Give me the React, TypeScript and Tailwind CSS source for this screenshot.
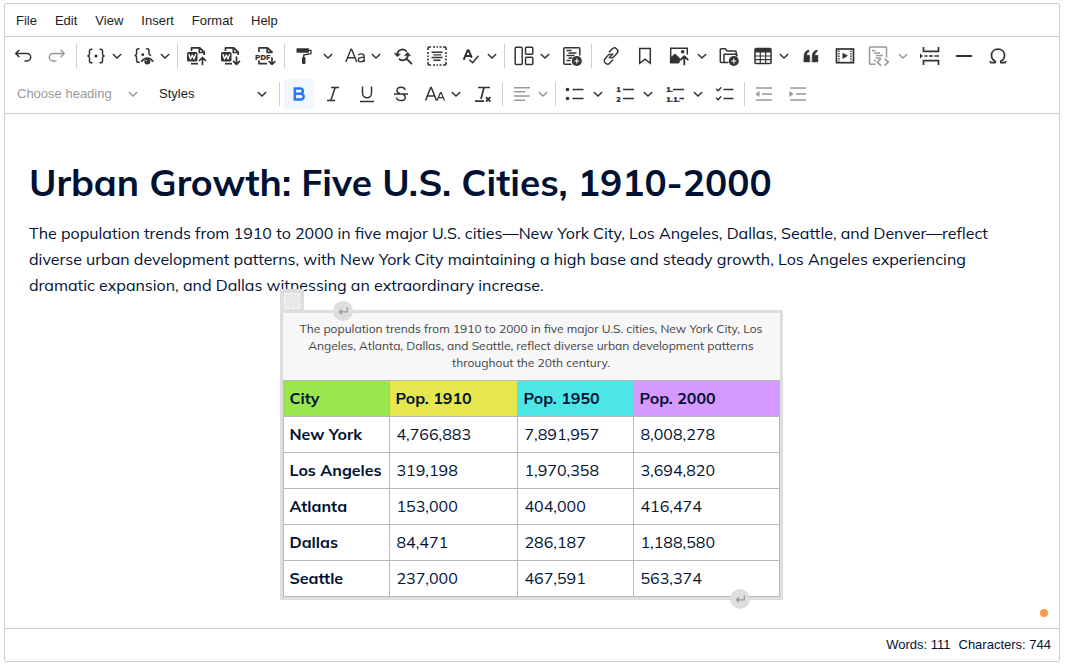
import { ReactNode } from 'react'

interface IconProps {
    children: ReactNode
}

function Icon({ children }: IconProps) {
    return (
        <svg
            viewBox="0 0 20 20"
            className="h-5 w-5 shrink-0 overflow-visible"
            fill="none"
            stroke="currentColor"
            strokeWidth="1.5"
            strokeLinecap="round"
            strokeLinejoin="round"
            fontFamily="Mulish, 'Open Sans', sans-serif"
            aria-hidden="true"
        >
            {children}
        </svg>
    )
}

const plusBadge = (
    <>
        <circle cx="14.8" cy="15" r="5" fill="currentColor" stroke="none" />
        <path d="M14.8 12.5v5M12.3 15h5" stroke="#fff" strokeWidth="1.1" strokeLinecap="butt" />
    </>
)

const wordDoc = (
    <>
        <path d="M4.5 5V1.8h8.3l4.4 4.4v2.8M12.3 2v4.5h4.7" strokeWidth="1.7" strokeLinecap="butt" />
        <path d="M4 17.7h7" strokeWidth="1.7" strokeLinecap="butt" />
        <rect x="0" y="6" width="10.5" height="9.5" rx="1.5" fill="currentColor" stroke="none" />
        <path d="m2 8.5 1.5 4.5 1.75-4L7 13l1.5-4.5" stroke="#fff" strokeWidth="1.3" />
    </>
)

const icons: Record<string, ReactNode> = {
    undo: <path d="M6 4.3 2.7 7.5 6 10.7M2.9 7.5H14a3.7 3.7 0 0 1 0 7.4h-2" />,
    redo: <path d="M14 4.3l3.3 3.2L14 10.7M17.1 7.5H6a3.7 3.7 0 0 0 0 7.4h3" />,
    mergeField: (
        <>
            <path d="M6 3.2H5.3c-1.2 0-1.8.6-1.8 1.8v2.7c0 1.3-.5 2-1.6 2.3 1.1.3 1.6 1 1.6 2.3V15c0 1.2.6 1.8 1.8 1.8H6M14 3.2h.7c1.2 0 1.8.6 1.8 1.8v2.7c0 1.3.5 2 1.6 2.3-1.1.3-1.6 1-1.6 2.3V15c0 1.2-.6 1.8-1.8 1.8H14" />
            <circle cx="10" cy="10" r="1.6" fill="currentColor" stroke="none" />
        </>
    ),
    mergePreview: (
        <>
            <path d="M5 2.7h-.6c-1.2 0-1.8.6-1.8 1.8v2.7c0 1.3-.4 2-1.5 2.3 1.1.3 1.5 1 1.5 2.3v2.7c0 1.2.6 1.8 1.8 1.8H5M12.6 2.7h.6c1.2 0 1.8.6 1.8 1.8v2.7c0 1.3.4 1.8 1.5 2.1" />
            <circle cx="8.8" cy="8.7" r="1.4" fill="currentColor" stroke="none" />
            <path d="M7.7 15.2c1.5-2.1 3.4-3.2 5.6-3.2s4.1 1.1 5.5 3.2" strokeWidth="1.7" />
            <circle cx="13.3" cy="15.5" r="3" fill="currentColor" stroke="none" />
            <circle cx="12.3" cy="14.6" r=".7" fill="#fff" stroke="none" />
        </>
    ),
    importWord: (
        <>
            {wordDoc}
            <path d="M15.5 18.5v-6.8M12.5 14.5l3-3 3 3" strokeWidth="1.7" />
        </>
    ),
    exportWord: (
        <>
            {wordDoc}
            <path d="M15.5 11v7M12.5 15.4l3 3 3-3" strokeWidth="1.7" />
        </>
    ),
    exportPdf: (
        <>
            <path d="M4 6V1.8h8.5L17 6.2v.8M12.2 2v4.3H17M4 14.5v3.2h8" strokeWidth="1.7" strokeLinecap="butt" />
            <text x="0" y="13.5" fontSize="7.5" fontWeight="900" fill="currentColor" stroke="none">PDF</text>
            <path d="M17 12v6.3M14.2 15.6l2.8 2.8 2.8-2.8" strokeWidth="1.7" />
        </>
    ),
    paint: (
        <>
            <rect x="2.5" y="2.3" width="12.5" height="4.4" rx=".8" fill="currentColor" stroke="none" />
            <path d="M15 4.3h2v3.4L9.7 9v2.5" strokeWidth="1.3" />
            <rect x="8" y="11" width="3.5" height="7" rx="1" fill="currentColor" stroke="none" />
        </>
    ),
    changeCase: (
        <>
            <path d="M.8 16 6 3.3h.6L11.8 16M2.6 11.7H10" strokeWidth="1.4" strokeLinecap="butt" />
            <path d="M13.3 9c.8-.8 1.7-1.2 3-1.2 1.9 0 2.9.9 2.9 2.7V16M19.2 11.3h-2.6c-2 0-3.3.7-3.3 2.3 0 1.4 1 2.2 2.5 2.2 1.7 0 3-.9 3.4-2.3" strokeWidth="1.3" strokeLinecap="butt" />
        </>
    ),
    find: (
        <>
            <path d="M13.2 5.2A5.2 5.2 0 0 0 4.2 9.2M6.5 13.2a5.2 5.2 0 0 0 8.3-5M13.8 13l4.7 4.7" strokeWidth="1.8" />
            <path d="M1.5 7.5 4.3 10.7l3-2.4zM11.6 9.5l3-3.2 2.8 3.1z" fill="currentColor" strokeWidth=".6" />
        </>
    ),
    selectAll: (
        <>
            <path d="M1 4V2a1 1 0 0 1 1-1h2M16 1h2a1 1 0 0 1 1 1v2M19 16v2a1 1 0 0 1-1 1h-2M4 19H2a1 1 0 0 1-1-1v-2" strokeWidth="1.6" strokeLinecap="butt" />
            <path d="M6 1h2M9.5 1h1.5M12.5 1h2M6 19h2M9.5 19h1.5M12.5 19h2M1 6v2M1 9.5V11M1 12.5v2M19 6v2M19 9.5V11M19 12.5v2" strokeWidth="1.6" strokeLinecap="butt" />
            <path d="M4.5 6.2h11M6.5 8.9h8M4.5 11.5h11M6.5 14.2h7" strokeWidth="1.4" strokeLinecap="butt" />
        </>
    ),
    spell: (
        <>
            <path d="M3 13 6.7 4.2h.8L10.5 11M4.7 9.9h4.6" strokeWidth="2" />
            <path d="m8.7 14 2.9 2.8 5.5-6.6" />
        </>
    ),
    layout: (
        <>
            <rect x="1.2" y="1.3" width="7" height="17.2" rx="1" />
            <rect x="11.5" y="1.3" width="7.3" height="7" rx="1" />
            <rect x="11.5" y="11.3" width="7.3" height="7.2" rx="1" />
        </>
    ),
    template: (
        <>
            <path d="M9 18.2H2.8a1 1 0 0 1-1-1V2.8a1 1 0 0 1 1-1h14a1 1 0 0 1 1 1V9" />
            <path d="M4.5 4.5h5M6.5 7h8M4.5 9.5h8M6.5 12h4M4.5 14.5h4" strokeWidth="1.4" strokeLinecap="butt" />
            {plusBadge}
        </>
    ),
    link: (
        <path d="m8.3 6.1 2.8-3c1.3-1.4 3.3-1.4 4.6-.2 1.4 1.3 1.4 3.3.1 4.7l-3.2 3.3c-.8.8-1.7 1.1-2.7 1M11.7 13.9l-2.8 3c-1.3 1.4-3.3 1.4-4.6.2-1.4-1.3-1.4-3.3-.1-4.7l3.2-3.3c.8-.8 1.7-1.1 2.7-1M8.2 11.8l3.6-3.7" strokeWidth="1.4" />
    ),
    bookmark: <path d="M4.7 2.6h10.6v14.7L10 13.1l-5.3 4.2z" strokeLinejoin="miter" />,
    image: (
        <>
            <path d="M9 16.4H1.7V2.3h16.6V8" strokeLinejoin="miter" />
            <path d="M1.7 11.5 6 7.8l5.5 5.2-1.5 4H1.7z" fill="currentColor" strokeWidth=".5" />
            <circle cx="13.7" cy="5.7" r="1.8" fill="currentColor" stroke="none" />
            <path d="M15.3 18.5v-8M11.8 13.7l3.5-3.5 3.5 3.5" strokeWidth="1.8" />
        </>
    ),
    folder: (
        <>
            <path d="M9 16.5H2.3a1 1 0 0 1-1-1V3.7a1 1 0 0 1 1-1h4L8.2 5h8a1 1 0 0 1 1 1v3" />
            <path d="M5 16V8.2h12.8V10" />
            {plusBadge}
        </>
    ),
    table: (
        <>
            <rect x="2" y="2.5" width="16" height="15" rx="1" />
            <path d="M2 3h16v3.5H2z" fill="currentColor" stroke="none" />
            <path d="M2 10h16M2 13.7h16M7.3 6v11.5M12.7 6v11.5" strokeWidth="1.2" />
        </>
    ),
    quote: (
        <path
            d="M3 10.5C3 7 4.7 4.5 8 4.1v1.6C6.4 6.2 5.7 7.7 5.7 9.2h3v6.7H3zM11.2 10.5c0-3.5 1.7-6 5-6.4v1.6c-1.6.5-2.3 2-2.3 3.5h3v6.7h-5.7z"
            fill="currentColor"
            strokeWidth=".5"
            strokeLinejoin="miter"
        />
    ),
    media: (
        <>
            <rect x="1.5" y="3" width="17" height="13.7" strokeLinejoin="miter" strokeWidth="1.7" />
            <path d="M4 4.5v11M16 4.5v11" strokeWidth="1.4" strokeDasharray="1.4 1.1" strokeLinecap="butt" />
            <path d="M7.5 6.7 13 9.8l-5.5 3.2z" fill="currentColor" stroke="none" />
        </>
    ),
    code: (
        <>
            <path d="M6 18.2H1.5a1 1 0 0 1-1-1V2a1 1 0 0 1 1-1h15a1 1 0 0 1 1 1v9" />
            <path d="M3 4.5h3.5M5 7h6M7 9.5h7M7 12h5M5 14.5h2" strokeWidth="1.3" strokeLinecap="butt" />
            <path d="m11.5 13.2-3.3 3 3.3 3M16 13.2l3.3 3-3.3 3" strokeWidth="1.6" />
        </>
    ),
    pageBreak: (
        <>
            <path d="M3.5 1v4.3h15V1M3.5 19v-4.3h15V19M4.5 10h3M9 10h4M14.5 10h4.5" strokeLinecap="butt" strokeLinejoin="miter" strokeWidth="1.7" />
            <path d="M0 7.5 3 10l-3 2.5z" fill="currentColor" stroke="none" />
        </>
    ),
    line: <path d="M2 10h16" strokeWidth="2" strokeLinecap="butt" />,
    omega: (
        <path d="M2.3 16.6h4.9v-1.3C5 14 3.5 12 3.5 9.4c0-3.7 2.7-6.3 6.5-6.3s6.5 2.6 6.5 6.3c0 2.6-1.5 4.6-3.7 5.9v1.3h4.9M2.3 16.6v-1.5M17.7 16.6v-1.5" strokeWidth="1.7" strokeLinecap="butt" />
    ),
    bold: (
        <path d="M5.8 4.5h5.4a2.6 2.6 0 0 1 0 5.2H5.8zM5.8 9.7h6a2.9 2.9 0 0 1 0 5.8h-6z" strokeWidth="2.5" strokeLinejoin="miter" />
    ),
    italic: <path d="M8 3.5h8M4 16.5h8M12.2 3.5l-4.4 13" strokeLinecap="butt" />,
    underline: <path d="M5.5 2.5v6.8a4.5 4.5 0 0 0 9 0V2.5M3 17.5h14" strokeLinecap="butt" />,
    strike: (
        <path d="M14 6c-.3-1.8-1.7-2.7-3.9-2.7C7.7 3.3 6 4.5 6 6.4c0 1.5 1 2.5 3 3.1M12 10.5c1.5.6 2.2 1.5 2.2 2.7 0 2-1.7 3.4-4.2 3.4-2.6 0-4.2-1.2-4.4-3.1M3 10h14" strokeLinecap="butt" />
    ),
    fontSize: (
        <>
            <path d="M.5 16.5 5.700 3.500h.6L11.500 16.500M2.500 12h7" strokeLinecap="butt" />
            <path d="M12 16.500 15.500 8.500h.6l3.400 8M13.500 13.700h4.500" strokeWidth="1.200" strokeLinecap="butt" />
        </>
    ),
    removeFormat: (
        <>
            <path d="M5 3.5h12M11 3.5l-3 11.5M2 17.2h9" strokeWidth="1.7" strokeLinecap="butt" />
            <path d="m13 13.2 4.4 4.4M17.4 13.2 13 17.6" strokeWidth="1.9" strokeLinecap="butt" />
        </>
    ),
    align: <path d="M2 3.7h16M2 7.8h11M2 12h16M2 16.2h11" strokeLinecap="butt" />,
    bullets: (
        <>
            <circle cx="2.5" cy="5.5" r="1.8" fill="currentColor" stroke="none" />
            <circle cx="2.5" cy="14.5" r="1.8" fill="currentColor" stroke="none" />
            <path d="M7.5 5.5h11M7.5 14.5h11" strokeWidth="1.7" strokeLinecap="butt" />
        </>
    ),
    numbers: (
        <>
            <text x="1" y="8" fontSize="8" fontWeight="900" fill="currentColor" stroke="none">1</text>
            <text x="1" y="17.5" fontSize="8" fontWeight="900" fill="currentColor" stroke="none">2</text>
            <path d="M8 5.5h11M8 14.5h11" strokeWidth="1.7" strokeLinecap="butt" />
        </>
    ),
    multilevel: (
        <>
            <text x="1" y="8" fontSize="8" fontWeight="900" fill="currentColor" stroke="none">1.</text>
            <text x="1" y="17.5" fontSize="8" fontWeight="900" fill="currentColor" stroke="none">1.1.</text>
            <path d="M8 5.5h11M14.5 14.5H19" strokeWidth="1.7" strokeLinecap="butt" />
        </>
    ),
    todo: (
        <>
            <path d="m1.5 5.2 1.6 1.5 2.7-3M1.5 14.2l1.6 1.5 2.7-3" />
            <path d="M8.5 5.5h10M8.5 14.5h10" strokeWidth="1.7" strokeLinecap="butt" />
        </>
    ),
    outdent: (
        <>
            <path d="M2 4h16M8 10h10M2 16h16" strokeLinecap="butt" />
            <path d="M5.5 7v6L1.3 10z" fill="currentColor" stroke="none" />
        </>
    ),
    indent: (
        <>
            <path d="M2 4h16M8 10h10M2 16h16" strokeLinecap="butt" />
            <path d="M1.3 7v6l4.2-3z" fill="currentColor" stroke="none" />
        </>
    )
}

function Chevron() {
    return (
        <svg viewBox="0 0 10 10" className="h-2.5 w-2.5 shrink-0" fill="none" stroke="currentColor" strokeWidth="1.6" strokeLinecap="round" aria-hidden="true">
            <path d="M1.3 3.5 5 7l3.7-3.5" />
        </svg>
    )
}

interface ToolProps {
    icon: string
    label: string
    disabled?: boolean
    active?: boolean
}

function Tool({ icon, label, disabled, active }: ToolProps) {
    return (
        <button
            aria-label={label}
            disabled={disabled}
            className={`flex h-[30px] w-[30px] shrink-0 items-center justify-center rounded-xs disabled:text-[#999] ${active ? 'bg-[#f0f7ff] text-[#2977ff]' : 'text-[#333]'}`}
        >
            <Icon>{icons[icon]}</Icon>
        </button>
    )
}

// One button that opens a panel
function Drop({ icon, label, disabled }: ToolProps) {
    return (
        <button
            aria-label={label}
            disabled={disabled}
            className="flex h-[30px] w-11 shrink-0 items-center gap-[6px] pl-[5px] text-[#333] disabled:text-[#999]"
        >
            <Icon>{icons[icon]}</Icon>
            <Chevron />
        </button>
    )
}

// Action button with a separate arrow
function Split({ icon, label, disabled, narrow }: ToolProps & { narrow?: boolean }) {
    return (
        <div className={`flex h-[30px] shrink-0 text-[#333] ${narrow ? 'w-[46px]' : 'w-[47px]'}`}>
            <Tool icon={icon} label={label} disabled={disabled} />
            <button aria-label={`${label} options`} disabled={disabled} className="flex flex-1 items-center justify-center disabled:text-[#999]">
                <Chevron />
            </button>
        </div>
    )
}

function Sep() {
    return <span className="h-6 w-px shrink-0 bg-[#ccced1]" />
}

function Select({ label, value, disabled }: { label: string; value: string; disabled?: boolean }) {
    return (
        <div className={`relative flex h-[30px] shrink-0 items-center ${disabled ? 'w-[138px] text-[#999]' : 'w-[125px] text-[#333]'}`}>
            <select
                aria-label={label}
                disabled={disabled}
                className={`h-full w-full appearance-none bg-transparent pl-[9px] outline-none ${disabled ? 'text-[#999]' : 'text-[#222]'}`}
            >
                <option>{value}</option>
            </select>
            <span className="pointer-events-none absolute right-2">
                <Chevron />
            </span>
        </div>
    )
}

function ReturnMark({ className }: { className: string }) {
    return (
        <button aria-label="Insert paragraph" className={`absolute flex h-5 w-5 items-center justify-center rounded-full bg-[#dedede] text-[#999] ${className}`}>
            <svg viewBox="0 0 10 8" className="h-2 w-2.5" fill="none" stroke="currentColor" strokeWidth="1.3" aria-hidden="true">
                <path d="M9.3.5v4.3H2" />
                <path d="M3.6 2.2.8 4.8l2.8 2.6z" fill="currentColor" strokeWidth=".5" />
            </svg>
        </button>
    )
}

const menus = ['File', 'Edit', 'View', 'Insert', 'Format', 'Help']

const rows = [
    ['New York', '4,766,883', '7,891,957', '8,008,278'],
    ['Los Angeles', '319,198', '1,970,358', '3,694,820'],
    ['Atlanta', '153,000', '404,000', '416,474'],
    ['Dallas', '84,471', '286,187', '1,188,580'],
    ['Seattle', '237,000', '467,591', '563,374']
]

function CityTable() {
    return (
        <figure className="relative mx-auto w-fit border-[3px] border-[#dedede]">
            <table className="w-[497px] table-fixed border-collapse bg-white text-base leading-[23px]">
                <caption className="bg-[#f7f7f7] px-4 pt-[7px] pb-[9px] text-xs leading-[17px] text-[#444]">
                    The population trends from 1910 to 2000 in five major U.S. cities, New York City, Los
                    <br />
                    Angeles, Atlanta, Dallas, and Seattle, reflect diverse urban development patterns
                    <br />
                    throughout the 20th century.
                </caption>
                <colgroup>
                    <col className="w-[106px]" />
                    <col className="w-[128px]" />
                    <col className="w-[116px]" />
                    <col />
                </colgroup>
                <thead>
                    <tr className="text-left">
                        <th className="border border-[#b8b8b8] bg-[#99e64d] px-1.5 py-1.5 font-bold">City</th>
                        <th className="border border-[#b8b8b8] bg-[#e6e64d] px-1.5 py-1.5 font-bold">Pop. 1910</th>
                        <th className="border border-[#b8b8b8] bg-[#4de6e6] px-1.5 py-1.5 font-bold">Pop. 1950</th>
                        <th className="border border-[#b8b8b8] bg-[#d699ff] px-1.5 py-1.5 font-bold">Pop. 2000</th>
                    </tr>
                </thead>
                <tbody>
                    {rows.map(([city, ...values]) => (
                        <tr key={city}>
                            <th scope="row" className="border border-[#b8b8b8] px-1.5 py-1.5 text-left font-bold whitespace-nowrap">{city}</th>
                            {values.map((value) => (
                                <td key={value} className="border border-[#b8b8b8] px-[7px] py-1.5">{value}</td>
                            ))}
                        </tr>
                    ))}
                </tbody>
            </table>
            <span className="absolute -top-6 -left-[3px] flex h-6 w-6 items-center justify-center bg-[#dedede]">
                <svg viewBox="0 0 16 16" className="h-4 w-4" aria-hidden="true">
                    <rect x=".5" y=".5" width="15" height="15" fill="#e9e7e9" stroke="#fff" strokeDasharray="3 2" />
                </svg>
            </span>
            <ReturnMark className="-top-3 left-[50px]" />
            <ReturnMark className="right-[30px] -bottom-3" />
        </figure>
    )
}

export default function App() {
    return (
        <div className="flex min-h-screen flex-col bg-white pt-[3px] pr-[5px] pb-1 pl-1 font-['Liberation_Sans',Arial,sans-serif] text-[13px] text-[#222]">
            <div className="flex flex-1 flex-col rounded-xs border border-[#ccced1]">
                <nav className="flex h-[33px] items-center border-b border-[#ccced1] pt-0.5 pl-0.5">
                    {menus.map((menu) => (
                        <button key={menu} className="px-[9px]">{menu}</button>
                    ))}
                </nav>

                <div className="flex flex-col gap-2 border-b border-[#ccced1] px-[3px] py-1">
                    <div className="flex items-center gap-1">
                        <Tool icon="undo" label="Undo" />
                        <Tool icon="redo" label="Redo" disabled />
                        <Sep />
                        <Drop icon="mergeField" label="Merge fields" />
                        <Drop icon="mergePreview" label="Preview merge fields" />
                        <Sep />
                        <Tool icon="importWord" label="Import from Word" />
                        <Tool icon="exportWord" label="Export to Word" />
                        <Tool icon="exportPdf" label="Export to PDF" />
                        <Sep />
                        <Split icon="paint" label="Format painter" />
                        <Drop icon="changeCase" label="Change case" />
                        <Tool icon="find" label="Find and replace" />
                        <Tool icon="selectAll" label="Select all" />
                        <Drop icon="spell" label="Spelling" />
                        <Sep />
                        <Drop icon="layout" label="Layout" />
                        <Tool icon="template" label="Insert template" />
                        <Sep />
                        <Tool icon="link" label="Link" />
                        <Tool icon="bookmark" label="Bookmark" />
                        <Split icon="image" label="Image" narrow />
                        <Tool icon="folder" label="Open file manager" />
                        <Drop icon="table" label="Table" />
                        <Tool icon="quote" label="Block quote" />
                        <Tool icon="media" label="Insert media" />
                        <Split icon="code" label="Code block" disabled />
                        <Tool icon="pageBreak" label="Page break" />
                        <Tool icon="line" label="Horizontal line" />
                        <Tool icon="omega" label="Special characters" />
                    </div>
                    <div className="flex items-center gap-1">
                        <Select label="Heading" value="Choose heading" disabled />
                        <Select label="Styles" value="Styles" />
                        <Sep />
                        <Tool icon="bold" label="Bold" active />
                        <Tool icon="italic" label="Italic" />
                        <Tool icon="underline" label="Underline" />
                        <Tool icon="strike" label="Strikethrough" />
                        <Drop icon="fontSize" label="Font size" />
                        <Tool icon="removeFormat" label="Remove format" />
                        <Sep />
                        <Drop icon="align" label="Text alignment" disabled />
                        <Sep />
                        <Split icon="bullets" label="Bulleted list" narrow />
                        <Split icon="numbers" label="Numbered list" narrow />
                        <Split icon="multilevel" label="Multi-level list" narrow />
                        <Tool icon="todo" label="To-do list" />
                        <Sep />
                        <Tool icon="outdent" label="Decrease indent" disabled />
                        <Tool icon="indent" label="Increase indent" disabled />
                    </div>
                </div>

                <main className="relative flex-1 pt-[42px] pr-[26px] pb-[27px] pl-6 font-[Mulish,'Open_Sans',sans-serif] text-[#001133]">
                    <h1 className="text-[37px] leading-[52px] font-bold whitespace-nowrap">Urban Growth: Five U.S. Cities, 1910-2000</h1>
                    <p className="mt-3 mb-3 text-base leading-[26px] whitespace-nowrap">
                        The population trends from 1910 to 2000 in five major U.S. cities—New York City, Los Angeles, Dallas, Seattle, and Denver—reflect
                        <br />
                        diverse urban development patterns, with New York City maintaining a high base and steady growth, Los Angeles experiencing
                        <br />
                        dramatic expansion, and Dallas witnessing an extraordinary increase.
                    </p>
                    <CityTable />
                    <span className="absolute right-[11px] bottom-[11px] h-2 w-2 rounded-full bg-[#ff9a4d]" />
                </main>

                <footer className="flex h-[33px] items-center justify-end gap-2 border-t border-[#ccced1] pr-2 text-[#001133]">
                    <span>Words: 111</span>
                    <span>Characters: 744</span>
                </footer>
            </div>
        </div>
    )
}
